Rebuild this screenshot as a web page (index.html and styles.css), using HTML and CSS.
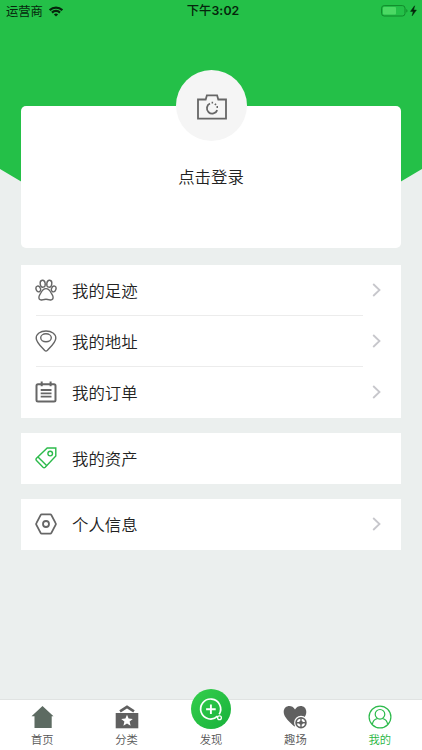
FILE: index.html
```
<!DOCTYPE html>
<html lang="zh-CN">
<head>
    <meta charset="UTF-8">
    <meta name="viewport" content="width=device-width, initial-scale=1.0">
    <title>我的</title>
    <link rel="stylesheet" href="styles.css">
</head>
<body>
<div class="page">
    <header class="status-bar">
        <div class="carrier">
            <span>运营商</span>
            <svg width="14" height="11" viewBox="0 0 14 11" fill="none" stroke="#06250c" stroke-width="2.2">
                <path d="M0.7 4.1a9 9 0 0 1 12.6 0M3 6.600a5.700 5.700 0 0 1 8 0"/>
                <path d="M7 10.600L4.900 8.500a3 3 0 0 1 4.200 0z" fill="#06250c" stroke="none"/>
            </svg>
        </div>
        <div class="time"><span>下午</span>3:02</div>
        <div class="battery">
            <svg width="36" height="12" viewBox="0 0 36 12">
                <rect x="0.6" y="0.6" width="23.4" height="10.4" rx="2.6" fill="none" stroke="#118a2b"/>
                <rect x="2" y="2" width="13" height="7.6" rx="1" fill="#4cd964"/>
                <path d="M25.3 4c1.6.5 1.6 3.1 0 3.6z" fill="#118a2b"/>
                <path d="M33.6 .8L29.5 6.4h2.7l-1 4.4 4.2-5.7h-2.8z" fill="#06250c" stroke="#06250c" stroke-width=".5"/>
            </svg>
        </div>
    </header>

    <main class="content">
        <section class="login-card">
            <div class="avatar">
                <svg width="30" height="26" viewBox="0 0 30 26" fill="none" stroke="#666" stroke-width="1.8">
                    <path d="M1 5.500h7.700l1.200-4.200h10.200l1.200 4.200H29v19.200H1z"/>
                    <path d="M13 9.500a5.300 5.300 0 1 0 7.200 6.600"/>
                    <path d="M14.600 8.600h1.500M17.900 9.900l1.100 1M19.500 13h1.500"/>
                </svg>
            </div>
            <p class="login-text">点击登录</p>
        </section>

        <section class="menu">
            <a class="menu-item">
                <svg class="icon" viewBox="0 0 22 22">
                    <ellipse cx="7.700" cy="4.700" rx="2.500" ry="3.500" transform="rotate(-8 7.700 4.700)"/>
                    <ellipse cx="14.300" cy="4.700" rx="2.500" ry="3.500" transform="rotate(8 14.300 4.700)"/>
                    <ellipse cx="3.300" cy="9.900" rx="2.200" ry="3" transform="rotate(-20 3.300 9.900)"/>
                    <ellipse cx="18.700" cy="9.900" rx="2.200" ry="3" transform="rotate(20 18.700 9.900)"/>
                    <path d="M11 9.600c-2.700 0-3.800 1.700-4.900 3.900-1.200 2.300-2.500 3.600-2.200 5.300.3 1.900 1.700 2.500 3.600 2 2.300-.7 4.700-.7 7 0 1.900.5 3.300-.1 3.600-2 .3-1.700-1-3-2.200-5.300-1.100-2.200-2.200-3.900-4.900-3.900z"/>
                </svg>
                <span class="label">我的足迹</span>
                <svg class="arrow" viewBox="0 0 9 14"><path d="M1.200 1l6.300 6-6.300 6"/></svg>
            </a>
            <a class="menu-item">
                <svg class="icon" viewBox="0 0 22 22">
                    <path d="M1.200 8.200C1.200 3.800 5.300 1 11 1s9.800 2.800 9.800 7.200c0 4-5.300 8.800-8.300 12.100-1.100 1.100-1.900 1.100-3 0-3-3.300-8.300-8.100-8.300-12.100z"/>
                    <ellipse cx="11" cy="7.800" rx="5.300" ry="4"/>
                </svg>
                <span class="label">我的地址</span>
                <svg class="arrow" viewBox="0 0 9 14"><path d="M1.200 1l6.300 6-6.300 6"/></svg>
            </a>
            <a class="menu-item">
                <svg class="icon" viewBox="0 0 22 22">
                    <rect x="1.500" y="3.200" width="19" height="17.300" rx="1.500" stroke-width="2"/>
                    <path d="M6.700 .6v4.600M15.600 .6v4.600" stroke-width="2"/>
                    <path d="M5.700 9h10.800M5.700 12.300h10.800M5.700 15.600h10.800" stroke-width="1.800"/>
                </svg>
                <span class="label">我的订单</span>
                <svg class="arrow" viewBox="0 0 9 14"><path d="M1.200 1l6.300 6-6.300 6"/></svg>
            </a>
        </section>

        <section class="menu">
            <a class="menu-item">
                <svg class="icon icon-green" viewBox="0 0 22 22">
                    <path d="M12.200 1h8.600v8L10.200 20.200q-1.100 1-2.200 0L1.500 13.500q-1-1.100 0-2.200z"/>
                    <path d="M3 9.900l8.600 8.700"/>
                    <circle cx="15.200" cy="6.600" r="2.300"/>
                </svg>
                <span class="label">我的资产</span>
            </a>
        </section>

        <section class="menu">
            <a class="menu-item">
                <svg class="icon" viewBox="0 0 22 22">
                    <path d="M6.800 1.300h8.400q.8 0 1.200.8l4.200 8q.5.900 0 1.800l-4.200 8q-.4.800-1.200.8H6.800q-.8 0-1.200-.8l-4.200-8q-.5-.9 0-1.800l4.200-8q.4-.8 1.200-.8z" stroke-width="1.800"/>
                    <circle cx="11" cy="11" r="3" stroke-width="1.800"/>
                </svg>
                <span class="label">个人信息</span>
                <svg class="arrow" viewBox="0 0 9 14"><path d="M1.200 1l6.300 6-6.300 6"/></svg>
            </a>
        </section>
    </main>

    <nav class="tab-bar">
        <a class="tab">
            <svg width="24" height="24" viewBox="0 0 24 24">
                <path d="M12.500 1l11 10.300h-1.800V23H4.500V11.300H1.500z" fill="#5d6b62"/>
            </svg>
            <span>首页</span>
        </a>
        <a class="tab">
            <svg width="24" height="24" viewBox="0 0 24 24">
                <path d="M5 6.400l7-4.600 7 4.600" fill="none" stroke="#606060" stroke-width="2.600"/>
                <path d="M.7 8h22.600v15.300H.7z" fill="#606060"/>
                <path d="M12 9.700l1.600 3.900 4.200.3-3.200 2.700 1 4.100-3.600-2.300-3.600 2.300 1-4.100-3.200-2.700 4.200-.3z" fill="#fff"/>
            </svg>
            <span>分类</span>
        </a>
        <a class="tab tab-find">
            <svg width="40" height="40" viewBox="0 0 40 40">
                <defs>
                    <linearGradient id="findFill" x1="0" y1="0" x2="1" y2="1">
                        <stop offset="0" stop-color="#35cf4c"/>
                        <stop offset="1" stop-color="#18b13b"/>
                    </linearGradient>
                </defs>
                <circle cx="20" cy="20" r="20" fill="url(#findFill)"/>
                <g fill="none" stroke="#fff" stroke-width="1.7">
                    <path d="M26.600 27.200a10 10 0 1 1 1.600-2"/>
                    <path d="M15.100 20.300h9.600M19.900 15.500v9.600" stroke-width="1.900"/>
                    <circle cx="28.500" cy="28.700" r="1.900" stroke-width="1.300"/>
                </g>
            </svg>
            <span>发现</span>
        </a>
        <a class="tab">
            <svg width="24" height="24" viewBox="0 0 24 24">
                <path d="M11.500 21.500C7 17.300.7 12.300.7 7c0-6.700 8.200-8 11.300-2.500C15.200-1 23.300.3 23.300 7c0 5.300-5 9.500-11.800 14.500z" fill="#606060"/>
                <circle cx="18" cy="17.700" r="6.900" fill="#fff"/>
                <circle cx="18" cy="17.700" r="4.900" fill="none" stroke="#606060" stroke-width="1.700"/>
                <path d="M18 13.200v9M13.500 17.700h9" stroke="#606060" stroke-width="1.400"/>
                <circle cx="18" cy="17.700" r="2" fill="#606060"/>
            </svg>
            <span>趣场</span>
        </a>
        <a class="tab active">
            <svg width="24" height="24" viewBox="0 0 24 24" fill="none" stroke="#2cba4b" stroke-width="1.2">
                <circle cx="12" cy="12" r="10.900"/>
                <circle cx="12" cy="9.300" r="4.800"/>
                <path d="M4.300 19.500c.5-3.500 2.600-5.500 5.300-6M19.700 19.500c-.5-3.500-2.600-5.500-5.300-6"/>
            </svg>
            <span>我的</span>
        </a>
    </nav>
</div>
</body>
</html>
```

FILE: styles.css
```
* {
    box-sizing: border-box;
}
body {
    margin: 0;
    font-family: "Noto Sans CJK SC", sans-serif;
    font-weight: 350;
    color: #222;
}
svg {
    display: block;
    flex-shrink: 0;
}
.page {
    position: relative;
    display: flex;
    flex-direction: column;
    height: 750px;
    background: #ebefee;
    overflow: hidden;
    isolation: isolate;
}
/* green backdrop, slanted on both sides */
.page::before {
    content: "";
    position: absolute;
    z-index: -1;
    top: 0;
    left: 0;
    width: 100%;
    height: 220px;
    background: #24c048;
    clip-path: polygon(0 0, 100% 0, 100% 169px, 84% 209px, 16% 209px, 0 169px);
}
.status-bar {
    display: grid;
    grid-template-columns: 1fr auto 1fr;
    align-items: center;
    height: 22px;
    padding: 0 5px 0 6px;
    font-size: 12.3px;
    font-weight: 400;
    line-height: 22px;
    color: #06250c;
}
.carrier {
    display: flex;
    align-items: center;
    gap: 6px;
}
.time {
    padding-left: 3px;
    font-family: Inter, "Noto Sans CJK SC", sans-serif;
    font-weight: 600;
    letter-spacing: 0.1px;
}
.time span {
    font-weight: 500;
}
.battery {
    justify-self: end;
}
.content {
    flex: 1;
    display: flex;
    flex-direction: column;
    gap: 15px;
    padding: 84px 21px 0;
}
.login-card {
    display: flex;
    flex-direction: column;
    align-items: center;
    height: 142px;
    margin-bottom: 2px;
    background: #fff;
    border-radius: 5px;
}
.avatar {
    display: flex;
    align-items: center;
    justify-content: center;
    width: 71px;
    height: 71px;
    margin-top: -36px;
    padding: 3px 0 0 2px;
    border-radius: 50%;
    background: #f5f5f5;
}
.login-text {
    margin: 23px 0 0;
    font-size: 16.4px;
    line-height: 24px;
}
.menu {
    background: #fff;
}
.menu-item {
    display: flex;
    align-items: center;
    height: 51px;
    padding: 0 20px 1px 14px;
}
.menu-item:not(:last-child) {
    background: linear-gradient(#ececec, #ececec) 15px 100% / 327px 1px no-repeat;
}
.icon {
    width: 22px;
    height: 22px;
    fill: none;
    stroke: #666;
    stroke-width: 1.4;
}
.icon-green {
    stroke: #2cba4b;
}
.label {
    flex: 1;
    margin-left: 15px;
    font-size: 16.4px;
    line-height: 24px;
}
.arrow {
    width: 9px;
    height: 14px;
    fill: none;
    stroke: #c7c7cc;
    stroke-width: 1.8;
}
.tab-bar {
    display: grid;
    grid-template-columns: repeat(5, 1fr);
    height: 51px;
    background: #fff;
    border-top: 1px solid #e0e3e2;
}
.tab {
    display: flex;
    flex-direction: column;
    align-items: center;
    gap: 3px;
    padding-top: 5px;
    font-size: 11.3px;
    line-height: 14px;
    color: #555;
}
.tab-find {
    padding-top: 0;
}
.tab-find svg {
    margin-top: -11px;
}
.active {
    color: #1fb540;
}
```
